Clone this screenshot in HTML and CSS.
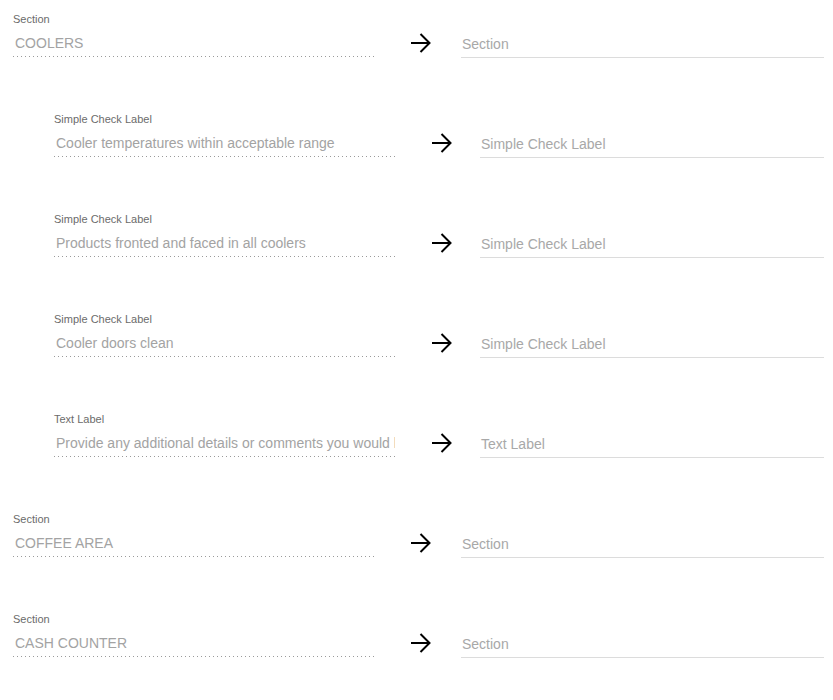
FILE: index.html
```html
<!DOCTYPE html>
<html>
<head>
<meta charset="utf-8">
<link rel="stylesheet" href="styles.css">
</head>
<body>
<div class="list">
  <div class="row section">
    <div class="src">
      <div class="label">Section</div>
      <div class="value">COOLERS</div>
    </div>
    <div class="arrow"><svg viewBox="0 0 20 20" width="20" height="20"><path d="M0 10H18.5M9.5 1L18.5 10L9.5 19" fill="none" stroke="#000" stroke-width="2"/></svg></div>
    <div class="dst"><div class="placeholder">Section</div></div>
  </div>
  <div class="row nested">
    <div class="src">
      <div class="label">Simple Check Label</div>
      <div class="value">Cooler temperatures within acceptable range</div>
    </div>
    <div class="arrow"><svg viewBox="0 0 20 20" width="20" height="20"><path d="M0 10H18.5M9.5 1L18.5 10L9.5 19" fill="none" stroke="#000" stroke-width="2"/></svg></div>
    <div class="dst"><div class="placeholder">Simple Check Label</div></div>
  </div>
  <div class="row nested">
    <div class="src">
      <div class="label">Simple Check Label</div>
      <div class="value">Products fronted and faced in all coolers</div>
    </div>
    <div class="arrow"><svg viewBox="0 0 20 20" width="20" height="20"><path d="M0 10H18.5M9.5 1L18.5 10L9.5 19" fill="none" stroke="#000" stroke-width="2"/></svg></div>
    <div class="dst"><div class="placeholder">Simple Check Label</div></div>
  </div>
  <div class="row nested">
    <div class="src">
      <div class="label">Simple Check Label</div>
      <div class="value">Cooler doors clean</div>
    </div>
    <div class="arrow"><svg viewBox="0 0 20 20" width="20" height="20"><path d="M0 10H18.5M9.5 1L18.5 10L9.5 19" fill="none" stroke="#000" stroke-width="2"/></svg></div>
    <div class="dst"><div class="placeholder">Simple Check Label</div></div>
  </div>
  <div class="row nested">
    <div class="src">
      <div class="label">Text Label</div>
      <div class="value">Provide any additional details or comments you would like to add</div>
    </div>
    <div class="arrow"><svg viewBox="0 0 20 20" width="20" height="20"><path d="M0 10H18.5M9.5 1L18.5 10L9.5 19" fill="none" stroke="#000" stroke-width="2"/></svg></div>
    <div class="dst"><div class="placeholder">Text Label</div></div>
  </div>
  <div class="row section">
    <div class="src">
      <div class="label">Section</div>
      <div class="value">COFFEE AREA</div>
    </div>
    <div class="arrow"><svg viewBox="0 0 20 20" width="20" height="20"><path d="M0 10H18.5M9.5 1L18.5 10L9.5 19" fill="none" stroke="#000" stroke-width="2"/></svg></div>
    <div class="dst"><div class="placeholder">Section</div></div>
  </div>
  <div class="row section">
    <div class="src">
      <div class="label">Section</div>
      <div class="value">CASH COUNTER</div>
    </div>
    <div class="arrow"><svg viewBox="0 0 20 20" width="20" height="20"><path d="M0 10H18.5M9.5 1L18.5 10L9.5 19" fill="none" stroke="#000" stroke-width="2"/></svg></div>
    <div class="dst"><div class="placeholder">Section</div></div>
  </div>
</div>
</body>
</html>
```
FILE: styles.css
```css
html, body {
  margin: 0;
  padding: 0;
  background: #fff;
}
body {
  font-family: "Liberation Sans", Arial, sans-serif;
}
.list {
  display: flex;
  flex-direction: column;
  width: 824px;
}
.row {
  display: flex;
  align-items: flex-start;
  height: 100px;
  padding-left: 13px;
}
.row.nested {
  padding-left: 54px;
}
.src {
  width: 361px;
  flex: none;
  padding-top: 13px;
}
.row.nested .src {
  width: 341px;
}
.label {
  font-size: 11px;
  line-height: 13px;
  color: #6b6b6b;
}
.value {
  margin-top: 8px;
  font-size: 14px;
  line-height: 19px;
  height: 19px;
  padding: 0 0 4px 2px;
  color: #a3a3a3;
  white-space: nowrap;
  overflow: hidden;
  background-image: linear-gradient(to right, #9a9a9a 1px, transparent 1px);
  background-size: 4px 1px;
  background-repeat: repeat-x;
  background-position: left bottom;
}
.arrow {
  flex: none;
  width: 87px;
  padding: 33px 0 0 37px;
  box-sizing: border-box;
  display: flex;
}
.row.nested .arrow {
  width: 85px;
  padding-left: 37px;
}
.dst {
  flex: 1;
  padding-top: 35px;
}
.placeholder {
  font-size: 14px;
  line-height: 19px;
  padding: 0 0 3px 1px;
  color: #a8a8a8;
  border-bottom: 1px solid #dcdcdc;
}
```
